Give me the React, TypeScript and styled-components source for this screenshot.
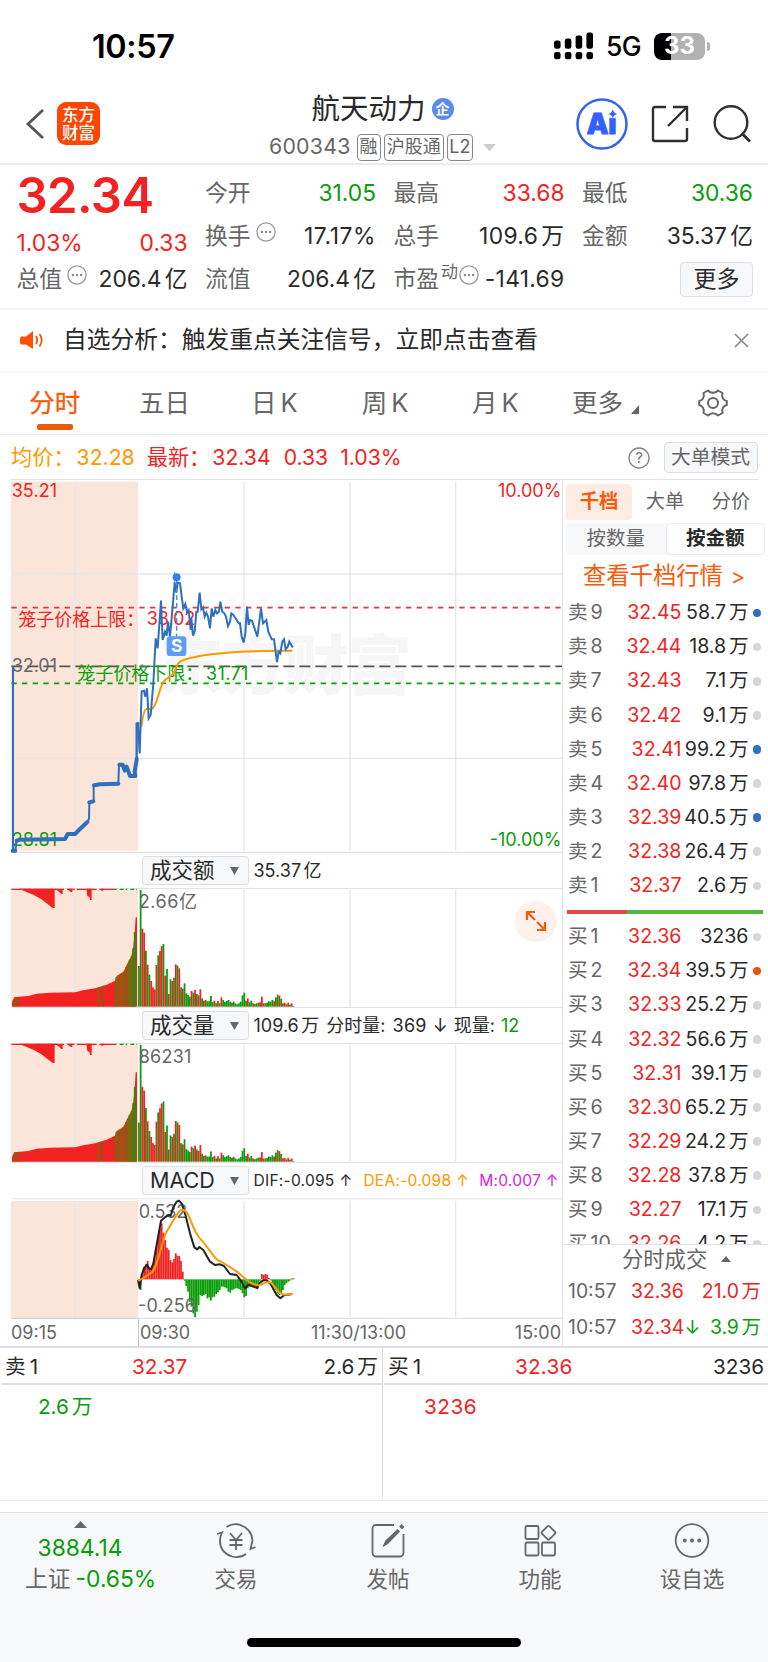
import React from "react";
import styled, { createGlobalStyle, css } from "styled-components";

const RED = "#f32222";
const GREEN = "#0a9d0a";
const ORANGE = "#f95a0a";
const AMBER = "#ff9800";
const INK = "#2a2a2a";
const GRAY = "#666";
const LINE = "#e0e2e8";
const PEACH = "#fbe5d8";
const BLUE = "#2f6fc0";

const GlobalStyle = createGlobalStyle`
  *, *::before, *::after { box-sizing: border-box; }
  body {
    margin: 0;
    background: #fff;
    color: ${INK};
    font-family: Inter, "Noto Sans CJK SC", "Liberation Sans", sans-serif;
    line-height: 1;
  }
  svg { display: block; flex: none; }
  svg text { font-family: Inter, "Noto Sans CJK SC", sans-serif; }
`;

/* ---------- shared ---------- */

const Screen = styled.main`
  width: 768px;
  height: 1662px;
  overflow: hidden;
  display: flex;
  flex-direction: column;
`;

const Text = styled.span<{ $c?: string; $s?: number; $w?: number; $ls?: number; $ml?: number }>`
  color: ${(p) => p.$c ?? "inherit"};
  ${(p) => p.$s && css`font-size: ${p.$s}px;`}
  ${(p) => p.$w && css`font-weight: ${p.$w};`}
  letter-spacing: ${(p) => p.$ls ?? 0}px;
  margin-left: ${(p) => p.$ml ?? 0}px;
  white-space: nowrap;
`;

const Unit = styled.span`
  margin-left: 0.14em;
`;

/* Splits "58.7万" so the unit keeps a small gap after the digits. */
function Qty({ v }: { v: string }) {
  const m = v.match(/^([\d.\-%]+)([^\d.\-%]+)$/);
  return m ? (
    <>
      {m[1]}
      <Unit>{m[2]}</Unit>
    </>
  ) : (
    <>{v}</>
  );
}

/* ---------- status bar ---------- */

const StatusBar = styled.div`
  height: 80px;
  flex: none;
  display: flex;
  align-items: center;
  padding: 12px 58px 0 92px;
  color: #000;
`;
const Clock = styled.div`
  font-size: 32.4px;
  font-weight: 600;
  letter-spacing: -0.4px;
  padding-top: 2px;
  flex: 1;
`;
const Battery = styled.div`
  width: 51px;
  height: 27px;
  border-radius: 8px;
  margin-left: 13px;
  background: linear-gradient(90deg, #000 17px, #b1b1b1 17px);
  color: #fff;
  font-size: 24px;
  font-weight: 700;
  display: flex;
  align-items: center;
  justify-content: center;
`;
const BatteryNub = styled.div`
  width: 3px;
  height: 9px;
  margin-left: 2px;
  border-radius: 0 4px 4px 0;
  background: #b1b1b1;
`;

/* ---------- header ---------- */

const Header = styled.header`
  height: 85px;
  flex: none;
  display: grid;
  grid-template-columns: 1fr auto 1fr;
  padding: 0 17px 0 14px;
  border-bottom: 2px solid #ebebeb;
`;
const HeaderLeft = styled.div`
  display: flex;
  align-items: center;
  padding: 4px 0 0 11px;
  gap: 12px;
`;
const Logo = styled.div`
  width: 43px;
  height: 43px;
  border-radius: 9px;
  background: #fd4600;
  color: #fff;
  font: 500 16.5px/18px "Noto Sans CJK SC", sans-serif;
  text-align: center;
  padding-top: 3px;
`;
const HeaderMid = styled.div`
  display: flex;
  flex-direction: column;
  align-items: center;
  padding-top: 12px;
`;
const TitleRow = styled.div`
  display: flex;
  align-items: center;
  gap: 6px;
  height: 34px;
  font-size: 28.5px;
`;
const CorpDot = styled.span`
  width: 22px;
  height: 22px;
  border-radius: 50%;
  background: #5a8bee;
  color: #fff;
  font-size: 14px;
  font-weight: 700;
  line-height: 21px;
  text-align: center;
`;
const CodeRow = styled.div`
  display: flex;
  align-items: center;
  margin-top: 7px;
  height: 28px;
  color: ${GRAY};
`;
const Badge = styled.span<{ $w: number }>`
  width: ${(p) => p.$w}px;
  height: 27px;
  margin-right: 3.5px;
  border: 1.5px solid #888;
  border-radius: 4px;
  font-size: 18px;
  line-height: 23px;
  text-align: center;
  white-space: nowrap;
`;
const HeaderRight = styled.div`
  display: flex;
  align-items: center;
  justify-content: flex-end;
  padding-top: 4px;
`;

/* ---------- quote ---------- */

const Quote = styled.section`
  height: 145px;
  flex: none;
  display: grid;
  grid-template-columns: repeat(4, 171px);
  column-gap: 17.5px;
  padding: 7px 0 0 16.5px;
  border-bottom: 2px solid #f5f5f5;
`;
const QuoteCol = styled.div`
  display: flex;
  flex-direction: column;
`;
const QuoteRow = styled.div<{ $h?: number }>`
  height: ${(p) => p.$h ?? 43}px;
  display: flex;
  align-items: center;
  justify-content: space-between;
  font-size: 22.8px;
  white-space: nowrap;
`;
const Key = styled.span`
  display: flex;
  align-items: center;
  color: ${GRAY};
  svg { margin: -9px 0 0 5px; }
  sup { font-size: 17px; margin: -14px 0 0 2px; }
  sup + svg { margin-left: 1px; }
`;
const BigPrice = styled.div`
  height: 49px;
  color: ${RED};
  font-size: 49px;
  font-weight: 600;
  line-height: 48px;
  letter-spacing: -0.6px;
`;
const SoftButton = styled.span<{ $w: number; $h: number; $s: number; $c?: string }>`
  width: ${(p) => p.$w}px;
  height: ${(p) => p.$h}px;
  display: flex;
  align-items: center;
  justify-content: center;
  border: 1.5px solid #dcdee6;
  border-radius: 4px;
  background: #f7f8fa;
  color: ${(p) => p.$c ?? INK};
  font-size: ${(p) => p.$s}px;
  white-space: nowrap;
`;

/* ---------- notice, tabs, info ---------- */

const Notice = styled.section`
  height: 63px;
  flex: none;
  display: flex;
  align-items: center;
  padding: 0 19px 1px 20px;
  border-bottom: 2px solid #f8f8f8;
  font-size: 23.75px;
`;
const NoticeText = styled.span`
  flex: 1;
  margin-left: 19px;
`;
const Tabs = styled.nav`
  height: 62px;
  flex: none;
  display: grid;
  grid-template-columns: repeat(7, 1fr);
  border-bottom: 1px solid #ededed;
`;
const Tab = styled.span<{ $on?: boolean; $pl?: number }>`
  display: flex;
  align-items: center;
  justify-content: center;
  position: relative;
  gap: 4px;
  padding: 0 0 2px ${(p) => p.$pl ?? 0}px;
  font-size: 25.5px;
  color: ${(p) => (p.$on ? ORANGE : GRAY)};
  ${(p) =>
    p.$on &&
    css`
      -webkit-text-stroke: 0.3px ${ORANGE};
      &::after {
        content: "";
        position: absolute;
        left: calc(50% - 18px);
        bottom: 4px;
        width: 36px;
        height: 6px;
        border-radius: 2px;
        background: #ef5a08;
      }
    `}
`;
const Info = styled.section`
  height: 45px;
  flex: none;
  display: flex;
  align-items: center;
  margin: 0 10.5px 0 11px;
  padding-top: 1px;
  font-size: 21.2px;
  border-bottom: 1px solid ${LINE};
`;
const Spacer = styled.span`
  flex: 1;
`;

/* ---------- body ---------- */

const Body = styled.section`
  display: flex;
  height: 866px;
  flex: none;
`;
const Charts = styled.div`
  width: 562px;
  display: flex;
  flex-direction: column;
`;
const IndicatorRow = styled.div<{ $h: number }>`
  height: ${(p) => p.$h}px;
  display: flex;
  align-items: center;
  padding-left: 142px;
  font-size: 18px;
  white-space: nowrap;
`;
const Selector = styled.span`
  width: 107px;
  flex: none;
  height: 28.5px;
  display: flex;
  align-items: center;
  justify-content: space-between;
  padding: 0 9px 0 7px;
  margin-right: 4.5px;
  border: 1.5px solid #dcdee6;
  border-radius: 3px;
  background: #f7f8fa;
  font-size: 21.5px;
`;
const TimeAxis = styled.div`
  height: 27px;
  display: grid;
  grid-template-columns: 127px 173px 1fr auto;
  margin-left: 11px;
  padding-right: 1px;
  font-size: 18px;
  line-height: 28px;
  color: ${GRAY};
  span:nth-child(2) { border-left: 1px solid #c8cad2; padding-left: 1px; }
`;

const Book = styled.aside`
  width: 206px;
  border-left: 1px solid ${LINE};
  display: flex;
  flex-direction: column;
`;
const BookTabs = styled.div`
  display: flex;
  height: 36px;
  margin: 4px 0 0 3px;
  font-size: 19.3px;
  color: ${GRAY};
`;
const BookTab = styled.span<{ $on?: boolean }>`
  width: 66px;
  display: flex;
  align-items: center;
  justify-content: center;
  border-radius: 4px;
  ${(p) => p.$on && css`background: #feece4; color: ${ORANGE}; font-weight: 700;`}
`;
const Segments = styled.div`
  display: flex;
  width: 199px;
  height: 32px;
  margin: 3px 0 0 3px;
  border-radius: 4px;
  background: #f7f8fa;
  font-size: 19.5px;
  color: ${GRAY};
`;
const Segment = styled.span<{ $on?: boolean }>`
  width: 99.5px;
  display: flex;
  align-items: center;
  justify-content: center;
  ${(p) =>
    p.$on &&
    css`
      background: #fff;
      border: 1.5px solid #ececf0;
      border-radius: 5px;
      color: ${INK};
      font-weight: 700;
    `}
`;
const DeepLink = styled.div`
  height: 41px;
  display: flex;
  align-items: center;
  padding-left: 20px;
  font-size: 23.3px;
  color: ${ORANGE};
  white-space: nowrap;
`;
const Level = styled.div`
  height: 34.1px;
  flex: none;
  display: grid;
  grid-template-columns: 48px 65.5px 67px 8.5px;
  align-items: center;
  padding-left: 5px;
  font-size: 19.6px;
  white-space: nowrap;
`;
const Right = styled.span<{ $c?: string }>`
  color: ${(p) => p.$c ?? INK};
  display: flex;
  justify-content: flex-end;
`;
const Side = styled.span`
  color: ${GRAY};
`;
const Dot = styled.i<{ $c: string }>`
  width: 8.6px;
  height: 8.6px;
  margin-left: 4px;
  border-radius: 50%;
  background: ${(p) => p.$c};
`;
const RatioBar = styled.div`
  height: 4.5px;
  width: 196px;
  flex: none;
  margin: 6.5px 0 6px 4px;
  background: linear-gradient(115deg, #e64545 0 55px, #55b83e 55px);
`;
const Levels = styled.div<{ $h: number }>`
  height: ${(p) => p.$h}px;
  flex: none;
  overflow: hidden;
`;
const Trades = styled.div`
  border-top: 1px solid ${LINE};
  flex: 1;
`;
const TradesHead = styled.div`
  height: 28.5px;
  display: flex;
  align-items: center;
  gap: 14px;
  padding-left: 59px;
  font-size: 21.3px;
  color: ${GRAY};
`;
const Trade = styled.div`
  height: 35.8px;
  display: grid;
  grid-template-columns: 63px 1fr auto;
  align-items: center;
  padding: 1px 7px 0 5px;
  font-size: 19.4px;
  white-space: nowrap;
`;

/* ---------- best bid / ask ---------- */

const Best = styled.section`
  height: 155px;
  flex: none;
  display: grid;
  grid-template-columns: 383px 1fr;
  border-top: 2px solid #dcdee4;
  border-bottom: 1px solid #e8eaf0;
  padding-bottom: 2px;
`;
const BestSide = styled.div<{ $first?: boolean }>`
  padding-left: 1px;
  ${(p) => p.$first && css`border-right: 1.5px solid #d8dae0;`}
`;
const BestRow = styled.div`
  height: 37px;
  display: grid;
  grid-template-columns: 127px auto 1fr;
  align-items: center;
  padding: 3px 4px 0;
  border-bottom: 2px solid #dcdee4;
  font-size: 20.7px;
`;
const BestQueue = styled.div<{ $c: string; $x: number }>`
  padding: 12px 0 0 ${(p) => p.$x}px;
  font-size: 20.7px;
  color: ${(p) => p.$c};
`;

/* ---------- bottom bar ---------- */

const Bottom = styled.footer`
  margin-top: 10.5px;
  flex: 1;
  background: #f7f8fa;
  border-top: 1.5px solid #dfe1e6;
  display: flex;
  flex-direction: column;
  align-items: center;
`;
const BottomItems = styled.div`
  width: 100%;
  height: 125px;
  display: grid;
  grid-template-columns: 160px repeat(4, 152px);
`;
const BottomItem = styled.div`
  display: flex;
  flex-direction: column;
  align-items: center;
  padding-top: 10px;
  font-size: 21.5px;
  color: ${GRAY};
  svg { margin-bottom: 10px; }
`;
const IndexItem = styled.div`
  display: flex;
  flex-direction: column;
  align-items: center;
  padding-top: 8px;
  gap: 9px;
  font-size: 22.8px;
  color: ${GREEN};
  white-space: nowrap;
`;
const IndexChange = styled.span`
  align-self: flex-start;
  padding-left: 25px;
`;
const HomeBar = styled.div`
  width: 274px;
  height: 9px;
  border-radius: 5px;
  background: #000;
`;

/* ---------- small drawings ---------- */

const Dots = () => (
  <svg width="20" height="20" viewBox="0 0 20 20">
    <circle cx="10" cy="10" r="9.1" fill="none" stroke="#999" strokeWidth="1.3" />
    {[5.9, 10, 14.1].map((x) => (
      <circle key={x} cx={x} cy="10" r="1.2" fill="#888" />
    ))}
  </svg>
);

const Tri = ({ w, h, c, up }: { w: number; h: number; c: string; up?: boolean }) => (
  <svg width={w} height={h}>
    <path d={up ? `M0 ${h}L${w / 2} 0L${w} ${h}Z` : `M0 0H${w}L${w / 2} ${h}Z`} fill={c} />
  </svg>
);

const Signal = () => (
  <svg width="39" height="28" viewBox="0 0 39 28">
    {[8.5, 6.5, 3.5, 0.5].map((y, i) => (
      <g key={i}>
        <rect x={i * 10.8} y={y} width="6.6" height={16.7 - y} rx="2.3" />
        <rect x={i * 10.8} y="20" width="6.6" height="7.3" rx="2.3" />
      </g>
    ))}
  </svg>
);

/* ---------- chart data (units are thirds of a pixel) ---------- */

const PRICE =
  "414,760 419,850 425,664 432,662 436,680 441,655 446,745 452,735 460,640 467,505 473,535 483,392 488,510 495,485 500,497 504,455 510,500 518,410 524,337 529,368 533,338 540,340 545,380 550,415 556,402 561,425 566,420 572,480 574,445 579,497 584,485 589,425 593,425 599,368 604,418 609,412 614,440 619,428 624,440 630,475 635,415 640,440 646,420 651,430 657,425 661,395 667,425 673,430 678,440 684,468 690,455 694,430 700,435 710,450 716,460 720,460 725,500 731,518 736,490 741,410 746,465 750,450 756,452 772,500 783,415 789,460 799,450 805,485 815,508 822,508 831,576 836,545 841,550 847,515 852,508 857,538 863,530 868,515 877,530";
const PRE_PRICE =
  "38,1142 46,1142 50,1112 60,1109 195,1107 203,1092 225,1090 240,1077 262,1056 267,1046 268,997 281,994 281,946 300,943 355,941 357,884 368,884 374,902 380,890 390,918 406,918 404,905 410,866";
const AVERAGE =
  "M424 770C428 740 432 718 440 717H456C470 710 476 660 490 636C500 620 515 622 522 608C530 590 530 578 550 570C580 560 610 553 680 548C750 543 800 543 877 542";

/* bar tops measured down from the panel edge; the baseline is at 470 */
const VOLUME =
  "g348 g120 r236 r248 g302 r344 g374 r393 r412 r418 r345 g316 r303 r288 g282 r377 g357 r432 g388 r393 g383 r343 g347 r355 g412 r416 g400 g430 g435 g440 r423 g428 r420 g432 r436 r418 g445 g452 r450 g454 g454 g438 g456 r452 g460 r453 g460 r442 g450 g456 g453 g450 g455 r458 g455 g460 g463 g460 g455 g436 g428 g452 r445 g457 g452 r460 g462 g460 g458 r457 r440 g460 r460 g458 g454 g455 g450 r454 g442 g434 r437 g446 r460 r458 g463 r458 g464 r460 g468".split(
    " "
  );
const MACD =
  "375 390 345 320 313 303 320 325 315 295 265 235 205 190 218 240 263 270 300 307 297 280 287 288 303 335 362 378 395 425 440 460 472 455 435 405 408 405 402 415 412 422 412 410 402 397 390 380 380 382 385 395 398 390 388 385 385 387 390 400 412 408 385 380 378 380 378 382 375 362 342 345 342 344 354 361 370 378 390 400 405 402 390 375 370 365 362 355 355"
    .split(" ")
    .map(Number);
const PRE_VOLUME = [
  [36, 458], [42, 442], [85, 438], [110, 431], [150, 428], [225, 427], [250, 421], [285, 415],
  [320, 404], [345, 392], [350, 378], [370, 366], [385, 335], [394, 318], [400, 290], [405, 235], [407, 202], [411, 202],
];

const topAt = (x: number) => {
  const i = Math.max(1, PRE_VOLUME.findIndex((p) => p[0] >= x));
  const [x0, y0] = PRE_VOLUME[i - 1];
  const [x1, y1] = PRE_VOLUME[i];
  return y0 + ((y1 - y0) * (x - x0)) / (x1 - x0);
};
const STRIPES: [number, number, string][] = [
  [39, 2.4, "#6f6a08"], [45, 2.4, "#6f6a08"], [51, 2.4, "#6f6a08"], [57, 2.4, "#6f6a08"],
  [296, 4, "#4f7f08"], [310, 3, "#6f6a08"], [349, 5, "#2f9005"], [355, 2.6, "#547c08"],
  [361, 2.4, "#547c08"], [367, 3, "#547c08"], [372, 2.4, "#6f6a08"], [377, 3, "#547c08"],
  [382, 2.6, "#547c08"], [388, 4.5, "#2f9005"], [394, 3.5, "#3f8805"], [399, 4.5, "#1f9605"],
  [404, 5, "#0a9d0a"],
];

const Grid = ({ y1, y2 }: { y1: number; y2: number }) => (
  <g>
    <rect x="34" y={y1} width="380" height={y2 - y1} fill={PEACH} />
    {[224, 732, 1050, 1367].map((x) => (
      <path key={x} d={`M${x} ${y1}V${y2}`} stroke="#e4e6ed" strokeWidth="4" />
    ))}
    <path d={`M34 ${y1}V${y2}`} stroke={LINE} strokeWidth="2" />
  </g>
);

function PriceChart() {
  return (
    <svg width="562" height="373" viewBox="0 30 1686 1119">
      <Grid y1={35} y2={1142} />
      <text x="475" y="658" fontSize="194" fontWeight="900" fill="#f6f6f6" textLength="760">
        东方财富
      </text>
      <path d="M34 312H1686M34 865H1686" stroke="#e4e6ed" strokeWidth="4" />
      <path d="M34 1147H1686" stroke={LINE} strokeWidth="4" />
      <path d="M34 413H1686" stroke="#f03434" strokeWidth="5.500" strokeDasharray="16 16" />
      <path d="M34 589H1686" stroke="#555" strokeWidth="5.500" strokeDasharray="33 15" />
      <path d="M34 640H1686" stroke={GREEN} strokeWidth="5.500" strokeDasharray="16 16" />
      <g fontSize="54">
        <text x="35" y="82" fill={RED} textLength="136">35.21</text>
        <text x="1684" y="82" fill={RED} textAnchor="end" textLength="190">10.00%</text>
        <text x="35" y="605" fill={GRAY} textLength="136">32.01</text>
        <text x="35" y="1128" fill={GREEN} textLength="136">28.81</text>
        <text x="1684" y="1128" fill={GREEN} textAnchor="end" textLength="215">-10.00%</text>
        <text x="55" y="467" fill={RED}>笼子价格上限：</text>
        <text x="440" y="466" fill={RED} textLength="146">33.02</text>
        <text x="232" y="629" fill={GREEN}>笼子价格下限：</text>
        <text x="618" y="629" fill={GREEN} textLength="127">31.71</text>
      </g>
      <path d={AVERAGE} fill="none" stroke={AMBER} strokeWidth="6" />
      <g fill="none" stroke={BLUE} strokeLinejoin="round" strokeLinecap="round">
        <path d="M39 590V1140" strokeWidth="6" />
        <polyline points={PRE_PRICE} strokeWidth="6" />
        <path
          d="M38 1142H46M50 1112L60 1109L195 1107L203 1092H225L240 1077L262 1056M268 997L280 994M282 946L300 943L355 941M358 884H368L374 902L380 890L390 918H406L404 905L410 870V866"
          strokeWidth="12"
        />
        <path d="M410 866V760H416" strokeWidth="7" />
        <polyline points={PRICE} strokeWidth="6" strokeLinejoin="miter" />
      </g>
      <path d="M530 330V500" stroke="#3f87ee" strokeWidth="4" strokeDasharray="14 9" />
      <path d="M524 305V340" stroke={BLUE} strokeWidth="2" />
      <circle cx="530" cy="322" r="12" fill="#3180ee" />
      <rect x="500" y="499" width="59" height="59" rx="10" fill="#5c9dfb" />
      <text x="530" y="547" fontSize="52" fontWeight="700" fill="#fff" textAnchor="middle">S</text>
    </svg>
  );
}

function VolumeChart({ label, width, scale }: { label: string; width: number; scale: number }) {
  return (
    <svg width="562" height="120" viewBox="0 114 1686 360">
      <path d="M34 115.5H1686M34 472.5H1686" stroke={LINE} strokeWidth="3" />
      <Grid y1={120} y2={470} />
      <path d="M34 118H345" stroke={RED} strokeWidth="4" strokeDasharray="60 8 90 10 22 6" />
      <path d="M345 118H411" stroke={GREEN} strokeWidth="4" strokeDasharray="5 9 12 6" />
      <path
        d="M57 116L80 126L100 134L124 148L158 174H164V116ZM165 116L178 126L184 132H188V118ZM200 116L212 126H217V116ZM259 116L262 138L268 141L270 150H275V116ZM303 116V122H310V116Z"
        fill={RED}
      />
      <path
        d={`M36 470L${PRE_VOLUME.map((p) => p.join(" ")).join("L")}V470Z`}
        fill={RED}
      />
      {STRIPES.map(([x, w, c]) => (
        <path key={x} d={`M${x} ${topAt(x)}V470`} stroke={c} strokeWidth={w} />
      ))}
      {VOLUME.map((b, i) => {
        const h = (470 - Number(b.slice(1))) * (i === 1 ? 1 : scale);
        return (
          <rect
            key={i}
            x={414 + i * 5.27}
            y={470 - h}
            width="5.300"
            height={h}
            fill={b[0] === "r" ? RED : GREEN}
          />
        );
      })}
      <text x="416" y="174" fontSize="54" fill={GRAY} textLength={width}>
        {label}
      </text>
    </svg>
  );
}

function MacdChart() {
  return (
    <svg width="562" height="121" viewBox="0 114 1686 363">
      <path d="M34 116.5H1686" stroke={LINE} strokeWidth="3" />
      <Grid y1={123} y2={472} />
      <path d="M34 475H1686" stroke={LINE} strokeWidth="4" />
      <path d="M34 475H414" stroke="#c8cad2" strokeWidth="4" />
      {MACD.map((y, i) => (
        <rect
          key={i}
          x={414 + i * 5.27}
          y={Math.min(y, 358)}
          width="5.200"
          height={Math.max(2, Math.abs(y - 358))}
          fill={y < 358 ? RED : GREEN}
        />
      ))}
      <g fontSize="54" fill={GRAY}>
        <text x="416" y="174" textLength="146">0.532</text>
        <text x="414" y="455" textLength="174">-0.256</text>
      </g>
      <polyline
        points="414,360 419,385 425,345 432,325 441,314 446,325 453,328 460,310 468,265 483,182 495,172 505,165 512,167 520,142 530,125 537,122 545,130 555,160 570,220 583,262 592,268 598,261 610,270 630,305 645,315 660,313 672,318 690,342 710,345 725,365 735,385 745,374 755,378 772,384 780,368 790,361 800,361 812,372 830,405 841,415 852,406 877,402"
        fill="none"
        stroke="#222"
        strokeWidth="6"
        strokeLinejoin="round"
      />
      <path
        d="M414 362C430 358 440 345 455 338C475 320 478 265 500 215C512 195 525 170 540 152C548 147 555 150 562 160C575 185 580 210 597 232C615 250 630 275 650 298C670 308 690 320 715 338C735 355 745 370 775 376C790 375 800 360 815 370C835 390 835 402 855 404L877 402"
        fill="none"
        stroke={AMBER}
        strokeWidth="6"
      />
    </svg>
  );
}

const ExpandButton = styled.span`
  position: absolute;
  left: 515px;
  top: 12.5px;
  width: 41px;
  height: 41px;
  border-radius: 50%;
  background: #fef1eb;
  display: flex;
  align-items: center;
  justify-content: center;
`;
const Layer = styled.div`
  position: relative;
`;

type Row = [string, string, string, boolean];

const SELLS: Row[] = [
  ["9", "32.45", "58.7万", true],
  ["8", "32.44", "18.8万", false],
  ["7", "32.43", "7.1万", false],
  ["6", "32.42", "9.1万", false],
  ["5", "32.41", "99.2万", true],
  ["4", "32.40", "97.8万", false],
  ["3", "32.39", "40.5万", true],
  ["2", "32.38", "26.4万", false],
  ["1", "32.37", "2.6万", false],
];
const BUYS: Row[] = [
  ["1", "32.36", "3236", false],
  ["2", "32.34", "39.5万", true],
  ["3", "32.33", "25.2万", false],
  ["4", "32.32", "56.6万", false],
  ["5", "32.31", "39.1万", false],
  ["6", "32.30", "65.2万", false],
  ["7", "32.29", "24.2万", false],
  ["8", "32.28", "37.8万", false],
  ["9", "32.27", "17.1万", false],
  ["10", "32.26", "4.2万", false],
];

function LevelRow({ side, row, dot }: { side: string; row: Row; dot: string }) {
  return (
    <Level>
      <Side>
        {side}
        <Text $ml={3}>{row[0]}</Text>
      </Side>
      <Right $c={RED}>{row[1]}</Right>
      <Right>
        <Qty v={row[2]} />
      </Right>
      <Dot $c={row[3] ? dot : "#d3d6dd"} />
    </Level>
  );
}

export default function App() {
  return (
    <Screen>
      <GlobalStyle />
      <StatusBar>
        <Clock>10:57</Clock>
        <Signal />
        <Text $s={26.5} $w={500} $ml={13} $ls={-0.6}>5G</Text>
        <Battery>33</Battery>
        <BatteryNub />
      </StatusBar>

      <Header>
        <HeaderLeft>
          <svg width="20" height="32" viewBox="0 0 20 32">
            <path d="M18 2L3 16L18 30" fill="none" stroke="#555" strokeWidth="2.800" />
          </svg>
          <Logo>
            东方
            <br />
            财富
          </Logo>
        </HeaderLeft>
        <HeaderMid>
          <TitleRow>
            航天动力<CorpDot>企</CorpDot>
          </TitleRow>
          <CodeRow>
            <Text $s={21.3} $ls={0.25}>600343</Text>
            <Text $ml={6} />
            <Badge $w={24}>融</Badge>
            <Badge $w={59.5}>沪股通</Badge>
            <Badge $w={25.5}>L2</Badge>
            <Text $ml={7} />
            <Tri w={13} h={7} c="#ccc" />
          </CodeRow>
        </HeaderMid>
        <HeaderRight>
          <svg width="52" height="52" viewBox="0 0 52 52" fill="#3461fb">
            <circle cx="26" cy="26" r="24.500" fill="none" stroke="#3461fb" strokeWidth="2.500" />
            <text
              x="10.500"
              y="36"
              fontSize="28"
              fontWeight="900"
              textLength="30"
              stroke="#3461fb"
              strokeWidth="0.800"
              strokeLinejoin="round"
            >
              Ai
            </text>
            <circle cx="36.500" cy="15" r="5.200" fill="#fff" />
            <path d="M36.800 11.500L38.300 14.500L41 16L38.300 17.500L36.800 20L35.300 17.500L32.800 16L35.300 14.500Z" />
          </svg>
          <Text $ml={23} />
          <svg width="38" height="38" viewBox="0 0 38 38" fill="none" stroke="#2f2f2f" strokeWidth="2.400">
            <path d="M15 2H4Q2 2 2 4V34Q2 36 4 36H34Q36 36 36 34V23M22 2H36V16M36 2L17 21" />
          </svg>
          <Text $ml={24} />
          <svg width="38" height="38" viewBox="0 0 38 38" fill="none" stroke="#2f2f2f" strokeWidth="2.400">
            <circle cx="18" cy="17.500" r="16.300" />
            <path d="M29 28.500L37 36.500" strokeWidth="3" />
          </svg>
        </HeaderRight>
      </Header>

      <Quote>
        <QuoteCol>
          <BigPrice>32.34</BigPrice>
          <QuoteRow $h={44}>
            <Text $c={RED}>1.03%</Text>
            <Text $c={RED}>0.33</Text>
          </QuoteRow>
          <QuoteRow $h={29}>
            <Key>总值<Dots /></Key>
            <span><Qty v="206.4亿" /></span>
          </QuoteRow>
        </QuoteCol>
        <QuoteCol>
          <QuoteRow><Key>今开</Key><Text $c={GREEN}>31.05</Text></QuoteRow>
          <QuoteRow><Key>换手<Dots /></Key><Text $ls={0.6}>17.17%</Text></QuoteRow>
          <QuoteRow><Key>流值</Key><span><Qty v="206.4亿" /></span></QuoteRow>
        </QuoteCol>
        <QuoteCol>
          <QuoteRow><Key>最高</Key><Text $c={RED}>33.68</Text></QuoteRow>
          <QuoteRow><Key>总手</Key><Text $ls={0.35}><Qty v="109.6万" /></Text></QuoteRow>
          <QuoteRow><Key>市盈<sup>动</sup><Dots /></Key><Text $ls={0.3}>-141.69</Text></QuoteRow>
        </QuoteCol>
        <QuoteCol>
          <QuoteRow><Key>最低</Key><Text $c={GREEN}>30.36</Text></QuoteRow>
          <QuoteRow><Key>金额</Key><span><Qty v="35.37亿" /></span></QuoteRow>
          <QuoteRow><span /><SoftButton $w={73} $h={35} $s={23}>更多</SoftButton></QuoteRow>
        </QuoteCol>
      </Quote>

      <Notice>
        <svg width="24" height="20" viewBox="0 0 24 20">
          <path d="M1 6.500H6L13 1V19L6 14.500H1Q0 14 0 12V9Q0 7 1 6.500Z" fill="#fd4f05" />
          <path d="M16 6Q18.500 10 16 14M19.500 4Q24 10 19.500 16.500" fill="none" stroke="#fd4f05" strokeWidth="1.800" />
        </svg>
        <NoticeText>自选分析：触发重点关注信号，立即点击查看</NoticeText>
        <svg width="15" height="15" viewBox="0 0 15 15">
          <path d="M1 1L14 14M14 1L1 14" stroke="#888" strokeWidth="1.600" />
        </svg>
      </Notice>

      <Tabs>
        <Tab $on>分时</Tab>
        <Tab>五日</Tab>
        <Tab>日<span>K</span></Tab>
        <Tab $pl={2}>周<span>K</span></Tab>
        <Tab $pl={3}>月<span>K</span></Tab>
        <Tab $pl={5}>
          更多
          <svg width="13" height="22"><path d="M12 13V22H4Z" fill="#666" /></svg>
        </Tab>
        <Tab>
          <svg width="30" height="28" viewBox="0 0 30 28" fill="none" stroke="#666" strokeWidth="2">
            <path d="M10 1.500Q12 3.800 15 3.800Q18 3.800 20 1.500L24.500 4Q23.500 7 25 9.500Q26.500 11.700 28.800 12V16Q26.500 16.500 25 18.700Q23.500 21 24.500 24L20 26.500Q18 24.200 15 24.200Q12 24.200 10 26.500L5.500 24Q6.500 21 5 18.700Q3.500 16.500 1.200 16V12Q3.500 11.700 5 9.500Q6.500 7 5.500 4Z" strokeLinejoin="round" />
            <circle cx="15" cy="14" r="5" />
          </svg>
        </Tab>
      </Tabs>

      <Info>
        <Text $c={AMBER}>均价：</Text>
        <Text $c={AMBER} $ml={2}>32.28</Text>
        <Text $c={RED} $ml={12}>最新：</Text>
        <Text $c={RED} $ml={2}>32.34</Text>
        <Text $c={RED} $ml={13}>0.33</Text>
        <Text $c={RED} $ml={12}>1.03%</Text>
        <Spacer />
        <svg width="22" height="22" viewBox="0 0 22 22">
          <circle cx="11" cy="11" r="10" fill="none" stroke="#888" strokeWidth="1.400" />
          <text x="11" y="16.300" fontSize="15" fill="#777" textAnchor="middle">?</text>
        </svg>
        <Text $ml={14} />
        <SoftButton $w={94} $h={31} $s={19.8} $c={GRAY}>大单模式</SoftButton>
      </Info>

      <Body>
        <Charts>
          <PriceChart />
          <IndicatorRow $h={35}>
            <Selector>成交额<Tri w={9} h={8} c="#666" /></Selector>
            <span><Qty v="35.37亿" /></span>
          </IndicatorRow>
          <Layer>
            <VolumeChart label="2.66亿" width={175} scale={1} />
            <ExpandButton>
              <svg width="22" height="22" viewBox="0 0 22 22" fill="none" stroke="#f95a0a" strokeWidth="2.200">
                <path d="M10 2H2V10M2 2L10 10M12 20H20V12M20 20L12 12" />
              </svg>
            </ExpandButton>
          </Layer>
          <IndicatorRow $h={35}>
            <Selector>成交量<Tri w={9} h={8} c="#666" /></Selector>
            <span><Qty v="109.6万" /></span>
            <Text $ml={7}>分时量:</Text>
            <Text $ml={7} $ls={0.3}>369</Text>
            <Text $ml={6}>↓</Text>
            <Text $ml={6}>现量:</Text>
            <Text $ml={6} $c={GREEN}>12</Text>
          </IndicatorRow>
          <VolumeChart label="86231" width={158} scale={0.96} />
          <IndicatorRow $h={35}>
            <Selector>MACD<Tri w={9} h={8} c="#666" /></Selector>
            <Text $s={15.6} $ls={0.22}>DIF:-0.095 ↑</Text>
            <Text $s={15.6} $ls={0.22} $ml={11} $c={AMBER}>DEA:-0.098 ↑</Text>
            <Text $s={15.6} $ls={0.22} $ml={10} $c="#dd22dd">M:0.007 ↑</Text>
          </IndicatorRow>
          <MacdChart />
          <TimeAxis>
            <span>09:15</span>
            <span>09:30</span>
            <span>11:30/13:00</span>
            <span>15:00</span>
          </TimeAxis>
        </Charts>

        <Book>
          <BookTabs>
            <BookTab $on>千档</BookTab>
            <BookTab>大单</BookTab>
            <BookTab>分价</BookTab>
          </BookTabs>
          <Segments>
            <Segment>按数量</Segment>
            <Segment $on>按金额</Segment>
          </Segments>
          <DeepLink>
            查看千档行情<Text $ml={8} $s={22}>&gt;</Text>
          </DeepLink>
          <Levels $h={307}>
            {SELLS.map((r) => (
              <LevelRow key={r[0]} side="卖" row={r} dot="#2f6fc0" />
            ))}
          </Levels>
          <RatioBar />
          <Levels $h={324}>
            {BUYS.map((r) => (
              <LevelRow key={r[0]} side="买" row={r} dot="#e8560a" />
            ))}
          </Levels>
          <Trades>
            <TradesHead>
              分时成交
              <Tri w={10} h={6} c="#666" up />
            </TradesHead>
            <Trade>
              <Side>10:57</Side>
              <Text $c={RED}>32.36</Text>
              <Text $c={RED}><Qty v="21.0万" /></Text>
            </Trade>
            <Trade>
              <Side>10:57</Side>
              <Text $c={RED}>32.34<Text $c={GREEN} $s={19}>↓</Text></Text>
              <Text $c={GREEN}><Qty v="3.9万" /></Text>
            </Trade>
          </Trades>
        </Book>
      </Body>

      <Best>
        <BestSide $first>
          <BestRow>
            <span>卖<Text $ml={4}>1</Text></span>
            <Text $c={RED}>32.37</Text>
            <Right><Qty v="2.6万" /></Right>
          </BestRow>
          <BestQueue $c={GREEN} $x={37}><Qty v="2.6万" /></BestQueue>
        </BestSide>
        <BestSide>
          <BestRow>
            <span>买<Text $ml={4}>1</Text></span>
            <Text $c={RED} $ls={0.2}>32.36</Text>
            <Right>3236</Right>
          </BestRow>
          <BestQueue $c={RED} $x={40}><Text $ls={0.5}>3236</Text></BestQueue>
        </BestSide>
      </Best>

      <Bottom>
        <BottomItems>
          <IndexItem>
            <Tri w={13} h={7} c="#666" up />
            <span>3884.14</span>
            <IndexChange><Text $c={GRAY}>上证</Text><Text $ml={5}>-0.65%</Text></IndexChange>
          </IndexItem>
          <BottomItem>
            <svg width="40" height="36" viewBox="0 0 40 36" fill="none" stroke="#666" strokeWidth="1.800">
              <path d="M10.500 4Q16 0 23 1.500Q36 6 36.500 17.500L34.500 26L39.500 24M30 31Q24 35.500 16 33.500Q3.500 29 4 17Q4 14 6 9.500L1 11" />
              <path d="M14 10L20 17L26 10M20 17V27M13.500 17H26.500M13.500 22H26.500" />
            </svg>
            交易
          </BottomItem>
          <BottomItem>
            <svg width="34" height="36" viewBox="0 0 34 36" fill="none" stroke="#666" strokeWidth="1.800">
              <path d="M23 2H5Q1.500 2 1.500 6V29Q1.500 33.500 5 33.500H29Q32.500 33.500 32.500 29V11" />
              <path d="M13 22.500L15 18L26.500 7L28 8.500L17 20Z" fill="#666" strokeWidth="1.500" />
              <path d="M29.500 5L32 2.500" strokeWidth="4" />
            </svg>
            发帖
          </BottomItem>
          <BottomItem>
            <svg width="34" height="36" viewBox="0 0 34 36" fill="none" stroke="#666" strokeWidth="1.800" strokeLinejoin="round">
              <rect x="2.500" y="3" width="13" height="13" rx="1.500" />
              <rect x="2.500" y="19.500" width="13" height="13" rx="1.500" />
              <rect x="19" y="19.500" width="13" height="13" rx="1.500" />
              <rect x="20.300" y="4.500" width="10.500" height="10.500" rx="1.500" transform="rotate(45 25.500 9.700)" />
            </svg>
            功能
          </BottomItem>
          <BottomItem>
            <svg width="36" height="36" viewBox="0 0 36 36">
              <circle cx="18" cy="17.500" r="16.300" fill="none" stroke="#666" strokeWidth="1.800" />
              {[10.8, 18, 25.2].map((x) => (
                <circle key={x} cx={x} cy="17.500" r="1.900" fill="#666" />
              ))}
            </svg>
            设自选
          </BottomItem>
        </BottomItems>
        <HomeBar />
      </Bottom>
    </Screen>
  );
}
